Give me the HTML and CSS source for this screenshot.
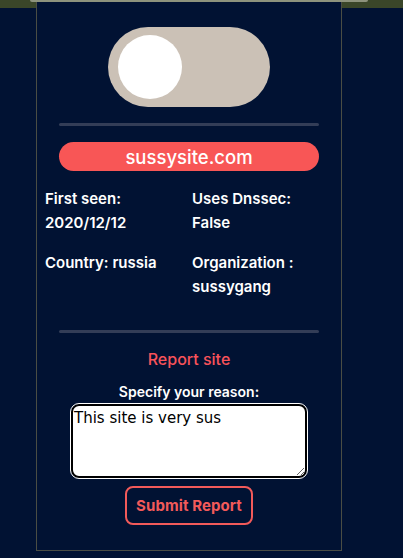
FILE: index.html
```html
<!DOCTYPE html>
<html>
<head>
<meta charset="utf-8">
<link rel="stylesheet" href="styles.css">
</head>
<body>
<div class="topstrip"><div class="topline"></div></div>
<div class="panel">
  <div class="toggle"><div class="knob"></div></div>
  <div class="divider"></div>
  <div class="pill">sussysite.com</div>
  <div class="info">
    <div class="cell">First seen:<br>2020/12/12</div>
    <div class="cell">Uses Dnssec:<br>False</div>
    <div class="cell">Country: russia</div>
    <div class="cell">Organization :<br>sussygang</div>
  </div>
  <div class="divider divider2"></div>
  <div class="report-title">Report site</div>
  <div class="reason">Specify your reason:</div>
  <textarea class="box">This site is very sus</textarea>
  <button class="submit">Submit Report</button>
</div>
</body>
</html>
```
FILE: styles.css
```css
html, body {
  margin: 0;
  padding: 0;
  background: #011233;
  height: 558px;
  overflow: hidden;
}
body {
  font-family: "Inter", "Noto Sans", sans-serif;
  color: #fff;
}
.topstrip {
  height: 8px;
  background: #3a4629;
  position: relative;
}
.topline {
  margin-left: 30px;
  width: 338px;
  height: 2px;
  background: #8d937d;
  border-radius: 0 0 3px 3px;
}
.panel {
  position: relative;
  margin-top: -6px;
  margin-left: 36px;
  width: 304px;
  height: 548px;
  border: 1px solid #4a4d44;
  border-top: 0;
  background: #011233;
  box-sizing: content-box;
  display: flex;
  flex-direction: column;
  align-items: center;
}
.toggle {
  margin-top: 25px;
  width: 162px;
  height: 80px;
  border-radius: 40px;
  background: #cbc1b6;
  display: flex;
  align-items: center;
  padding-left: 10px;
  box-sizing: border-box;
}
.knob {
  width: 64px;
  height: 64px;
  border-radius: 50%;
  background: #fff;
}
.divider {
  margin-top: 16px;
  width: 260px;
  height: 3px;
  border-radius: 2px;
  background: #333d57;
}
.pill {
  margin-top: 16px;
  width: 260px;
  height: 29px;
  border-radius: 15px;
  background: #f85656;
  color: #fff;
  font-size: 18.5px;
  font-weight: 500;
  display: flex;
  align-items: center;
  justify-content: center;
}
.info {
  margin-top: 16px;
  width: 288px;
  display: grid;
  grid-template-columns: 147px 141px;
  row-gap: 16px;
  font-size: 15px;
  font-weight: 600;
  line-height: 24px;
}
.divider2 {
  margin-top: 31px;
}
.report-title {
  margin-top: 16px;
  color: #f8525a;
  font-size: 16px;
  font-weight: 500;
}
.reason {
  margin-top: 14px;
  font-size: 14px;
  font-weight: 600;
}
.box {
  margin-top: 4px;
  width: 236px;
  height: 74px;
  box-sizing: border-box;
  border: 2px solid #000;
  outline: 1px solid #fff;
  border-radius: 8px;
  background: #fff;
  color: #000;
  font-family: "DejaVu Sans", sans-serif;
  font-size: 15px;
  line-height: 18px;
  padding: 3px 0 0 1px;
  resize: vertical;
}
.submit {
  margin-top: 8px;
  width: 128px;
  height: 39px;
  background: transparent;
  border: 2px solid #f25a5a;
  border-radius: 8px;
  color: #f25a5a;
  font-family: "Inter", "Noto Sans", sans-serif;
  font-weight: 700;
  font-size: 15px;
  letter-spacing: 0.1px;
}
```
